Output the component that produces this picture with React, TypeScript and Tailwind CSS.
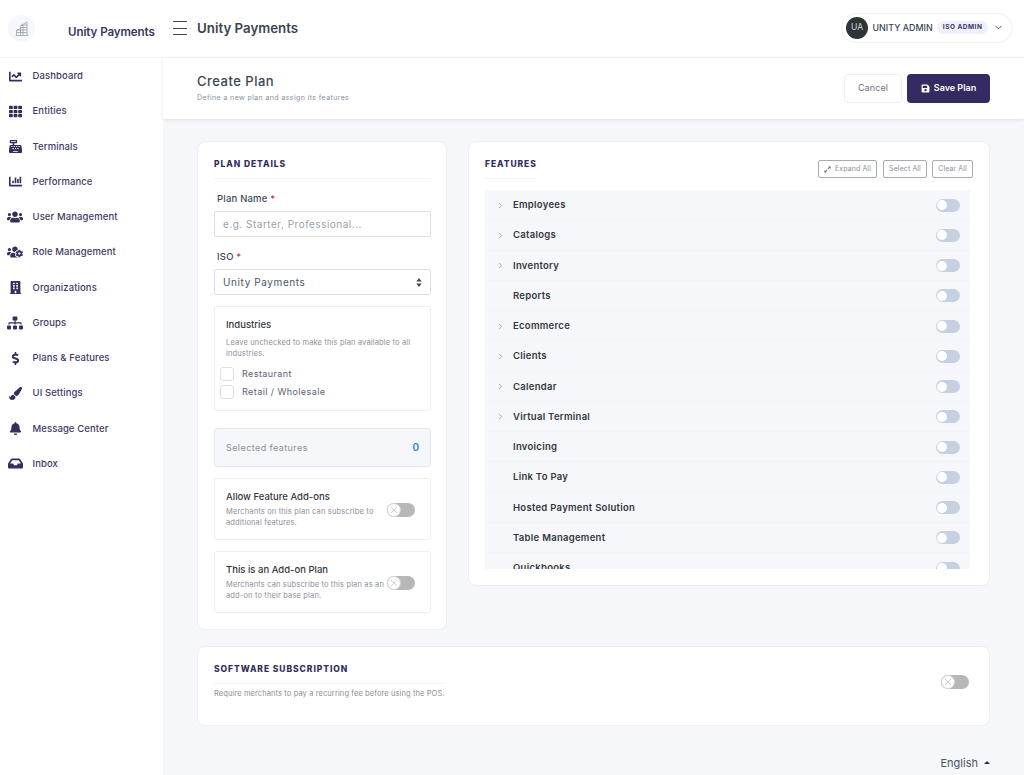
import { ChevronDown, ChevronRight } from 'lucide-react'
import {
  FaBell,
  FaBuilding,
  FaCashRegister,
  FaChartBar,
  FaChartLine,
  FaDollarSign,
  FaExpandAlt,
  FaInbox,
  FaPaintBrush,
  FaSave,
  FaSitemap,
  FaTh,
  FaUsers,
  FaUsersCog,
} from 'react-icons/fa'

const navItems = [
  { label: 'Dashboard', icon: FaChartLine, size: 'text-[13px]' },
  { label: 'Entities', icon: FaTh, size: 'text-[13px]' },
  { label: 'Terminals', icon: FaCashRegister, size: 'text-[13px]' },
  { label: 'Performance', icon: FaChartBar, size: 'text-[13px]' },
  { label: 'User Management', icon: FaUsers, size: 'text-[16px]' },
  { label: 'Role Management', icon: FaUsersCog, size: 'text-[16px]' },
  { label: 'Organizations', icon: FaBuilding, size: 'text-[13px]' },
  { label: 'Groups', icon: FaSitemap, size: 'text-[16px]' },
  { label: 'Plans & Features', icon: FaDollarSign, size: 'text-[13px]' },
  { label: 'UI Settings', icon: FaPaintBrush, size: 'text-[13px]' },
  { label: 'Message Center', icon: FaBell, size: 'text-[13px]' },
  { label: 'Inbox', icon: FaInbox, size: 'text-[15px]' },
]

const features = [
  { name: 'Employees', children: true },
  { name: 'Catalogs', children: true },
  { name: 'Inventory', children: true },
  { name: 'Reports', children: false },
  { name: 'Ecommerce', children: true },
  { name: 'Clients', children: true },
  { name: 'Calendar', children: true },
  { name: 'Virtual Terminal', children: true },
  { name: 'Invoicing', children: false },
  { name: 'Link To Pay', children: false },
  { name: 'Hosted Payment Solution', children: false },
  { name: 'Table Management', children: false },
  { name: 'Quickbooks', children: false },
]

function OffSwitch() {
  return (
    <div className="flex h-[14px] w-[28px] shrink-0 items-center rounded-full bg-[#b7b7b7]">
      <div className="flex h-[14px] w-[14px] items-center justify-center rounded-full border border-[#d4d4d4] bg-white">
        <svg width="8" height="8" viewBox="0 0 8 8" className="text-[#c4c4c4]">
          <path d="M1 1l6 6M7 1l-6 6" stroke="currentColor" strokeWidth="0.8" />
        </svg>
      </div>
    </div>
  )
}

function FeatureSwitch() {
  return (
    <div className="flex h-[13px] w-[24px] items-center rounded-full bg-[#c5d0e0] px-[1px]">
      <div className="h-[10px] w-[10px] rounded-full bg-white" />
    </div>
  )
}

function LogoMark() {
  return (
    <svg width="14" height="15" viewBox="0 0 14 15" fill="none" stroke="#98a1aa" strokeWidth="0.8">
      <path d="M.5 14.5h13M1.5 14V9.5L5.5 7.5V14M5.5 14V5L12 1V14M8 4v10M12 4H6M12 6.5H5.5M12 9H1.5M12 11.5H1.5" />
    </svg>
  )
}

function AddOnCard({ title, text, className }: { title: string; text: string; className: string }) {
  return (
    <div className={`rounded-[3px] border border-[#eceef2] pr-[15px] pl-[11px] ${className}`}>
      <div className="text-[9.5px] leading-[13px] font-medium text-[#33373d]">{title}</div>
      <div className="mt-[3px] flex items-start justify-between">
        <p className="w-[160px] text-[7.5px] leading-[11px] tracking-[0.15px] text-[#8b8f98]">{text}</p>
        <div className="-mt-[3px]">
          <OffSwitch />
        </div>
      </div>
    </div>
  )
}

export default function App() {
  return (
    <div className="flex h-[775px] w-[1024px] flex-col overflow-hidden bg-white font-['Inter',sans-serif]">
      {/* Top bar */}
      <header className="flex h-[58px] shrink-0 items-center border-b border-[#f2f3f5] pr-[11px]">
        <div className="flex w-[173px] items-center pl-[8px]">
          <div className="flex h-[27px] w-[27px] items-center justify-center rounded-full bg-[#f5f7fa]">
            <LogoMark />
          </div>
          <span className="mt-[8px] ml-[33px] text-[11.6px] font-semibold tracking-[-0.1px] whitespace-nowrap text-[#3b3760]">
            Unity Payments
          </span>
        </div>
        <button className="mb-[1px] flex h-[14px] w-[14px] flex-col justify-between">
          <span className="h-px w-full bg-[#3d4450]" />
          <span className="h-px w-full bg-[#3d4450]" />
          <span className="h-px w-full bg-[#3d4450]" />
        </button>
        <span className="mt-[1px] ml-[10px] text-[13.3px] font-semibold text-[#3d4450]">Unity Payments</span>
        <div className="mb-[2px] ml-auto flex h-[30px] w-[172px] items-center rounded-full border border-[#eef0f3] pl-[4px]">
          <div className="flex h-[22px] w-[22px] items-center justify-center rounded-full bg-[#2f3437] text-[8.5px] text-[#d7d9db]">
            UA
          </div>
          <span className="ml-[4.5px] text-[8.9px] font-medium whitespace-nowrap text-[#3d4450]">UNITY ADMIN</span>
          <span className="ml-[4.5px] flex h-[13px] w-[51px] items-center justify-center rounded-full bg-[#eef0fb] text-[6.5px] font-bold tracking-[0.5px] text-[#3b3760]">
            ISO ADMIN
          </span>
          <ChevronDown className="ml-[5px] h-[11px] w-[11px] text-[#3d4450]" />
        </div>
      </header>

      <div className="flex min-h-0 flex-1">
        {/* Sidebar */}
        <aside className="w-[163px] shrink-0 pt-[0.5px]">
          <nav>
            {navItems.map((item) => (
              <div key={item.label} className="flex h-[35.25px] items-center">
                <div className="flex w-[32.5px] shrink-0 justify-center pr-[2px]">
                  <item.icon className={`${item.size} text-[#352f5b]`} />
                </div>
                <span className="text-[9.5px] font-medium tracking-[0.1px] whitespace-nowrap text-[#3f3b63]">
                  {item.label}
                </span>
              </div>
            ))}
          </nav>
        </aside>

        <main className="flex min-w-0 flex-1 flex-col">
          {/* Page heading */}
          <div className="relative flex h-[61px] shrink-0 items-center justify-between bg-white px-[34px] shadow-[0_1px_4px_rgba(0,0,0,0.1)]">
            <div className="mt-[-2px]">
              <h1 className="text-[13px] leading-[18px] font-medium tracking-[0.5px] text-[#3d4450]">Create Plan</h1>
              <p className="mt-[3px] text-[7px] leading-[10px] tracking-[0.4px] text-[#8b8f98]">
                Define a new plan and assign its features
              </p>
            </div>
            <div className="mt-[-1px] flex gap-[5px]">
              <button className="h-[29px] w-[58px] rounded-[4px] border border-[#eceef2] text-[9px] tracking-[0.1px] text-[#6b7280]">
                Cancel
              </button>
              <button className="flex h-[29px] w-[83px] items-center justify-center gap-[4px] rounded-[4px] bg-[#352a62] text-[9px] font-semibold text-white">
                <FaSave className="text-[9px]" />
                Save Plan
              </button>
            </div>
          </div>

          {/* Content */}
          <div className="flex min-h-0 flex-1 flex-col bg-[#f5f7fa] px-[34px] pt-[22px]">
            <div className="flex items-start gap-[21px]">
              {/* Plan details */}
              <section className="h-[489px] w-[250px] shrink-0 rounded-[8px] border border-[#eceef2] bg-white pt-[15px] pr-[15px] pl-[16px]">
                <h2 className="border-b border-[#f2f3f5] pb-[7px] text-[8.5px] leading-[14px] font-extrabold tracking-[0.93px] text-[#332e5c]">
                  PLAN DETAILS
                </h2>
                <label className="mt-[14px] block pl-[3px] text-[9.5px] leading-[12px] font-medium tracking-[0.2px] text-[#414a5c]">
                  Plan Name <span className="text-[#d0315a]">*</span>
                </label>
                <input
                  placeholder="e.g. Starter, Professional..."
                  className="mt-[6px] block h-[26px] w-full rounded-[2px] border border-[#dcdfe4] px-[8px] text-[10px] tracking-[0.5px] text-[#414a5c] outline-none placeholder:text-[#9ca0a8]"
                />
                <label className="mt-[14px] block pl-[3px] text-[9.5px] leading-[12px] font-medium tracking-[0.2px] text-[#414a5c]">
                  ISO <span className="text-[#d0315a]">*</span>
                </label>
                <div className="relative mt-[6px]">
                  <select className="block h-[26px] w-full appearance-none rounded-[2px] border border-[#dcdfe4] bg-white px-[8px] text-[10px] tracking-[0.6px] text-[#4b5563] outline-none">
                    <option>Unity Payments</option>
                  </select>
                  <svg width="6" height="9" viewBox="0 0 6 9" className="absolute top-[9px] right-[9px] text-[#3d4450]">
                    <path d="M3 0l2.6 3.4H.4zM3 9L.4 5.6h5.2z" fill="currentColor" />
                  </svg>
                </div>

                <div className="mt-[11px] h-[105px] rounded-[3px] border border-[#eceef2] pt-[12px] pl-[11px]">
                  <div className="text-[9.5px] leading-[12px] font-medium text-[#33373d]">Industries</div>
                  <p className="mt-[6px] w-[190px] text-[7.5px] leading-[11px] tracking-[0.15px] text-[#8b8f98]">
                    Leave unchecked to make this plan available to all industries.
                  </p>
                  <div className="mt-[8px] -ml-[6px] flex flex-col gap-[4px]">
                    {['Restaurant', 'Retail / Wholesale'].map((name) => (
                      <label key={name} className="flex h-[14px] items-center gap-[8px]">
                        <span className="h-[14px] w-[14px] rounded-[3px] border border-[#dcdfe4] bg-white" />
                        <span className="text-[9px] tracking-[0.42px] text-[#5b6270]">{name}</span>
                      </label>
                    ))}
                  </div>
                </div>

                <div className="mt-[17px] flex h-[39px] items-center justify-between rounded-[3px] border border-[#e6e9ee] bg-[#f5f7fa] px-[11px]">
                  <span className="text-[9px] tracking-[0.42px] text-[#8b8f98]">Selected features</span>
                  <span className="text-[10px] font-semibold text-[#2f7fd0]">0</span>
                </div>

                <AddOnCard
                  title="Allow Feature Add-ons"
                  text="Merchants on this plan can subscribe to additional features."
                  className="mt-[11px] h-[62px] pt-[11px]"
                />
                <AddOnCard
                  title="This is an Add-on Plan"
                  text="Merchants can subscribe to this plan as an add-on to their base plan."
                  className="mt-[11px] h-[62px] pt-[11px]"
                />
              </section>

              {/* Features */}
              <section className="h-[445px] min-w-0 flex-1 rounded-[8px] border border-[#eceef2] bg-white px-[16px] pt-[15px]">
                <div className="flex items-start justify-between">
                  <h2 className="border-b border-[#f2f3f5] pb-[7px] text-[8.5px] leading-[14px] font-extrabold tracking-[0.93px] text-[#332e5c]">
                    FEATURES
                  </h2>
                  <div className="mt-[3px] flex gap-[5px] text-[7px] tracking-[0.1px] text-[#8b8f98]">
                    <button className="mr-[1px] flex h-[18px] w-[59px] items-center justify-center gap-[4px] rounded-[2px] border border-[#a8abb0]">
                      <FaExpandAlt className="text-[7px] text-[#5b6270]" />
                      Expand All
                    </button>
                    <button className="h-[18px] w-[44px] rounded-[2px] border border-[#a8abb0]">Select All</button>
                    <button className="h-[18px] w-[41px] rounded-[2px] border border-[#a8abb0]">Clear All</button>
                  </div>
                </div>
                <div className="mt-[11px] h-[379px] w-[485px] overflow-hidden bg-[#f5f7fa]">
                  {features.map((feature) => (
                    <div
                      key={feature.name}
                      className="flex h-[30.25px] shrink-0 items-center border-b border-[#f2f3f5] pt-[1px] pr-[10px]"
                    >
                      <div className="flex w-[28px] shrink-0 justify-center pl-[2px]">
                        {feature.children && <ChevronRight className="h-[9px] w-[9px] text-[#8b8f98]" strokeWidth={2} />}
                      </div>
                      <span className="text-[9.5px] font-semibold tracking-[0.28px] text-[#33373d]">{feature.name}</span>
                      <div className="ml-auto">
                        <FeatureSwitch />
                      </div>
                    </div>
                  ))}
                </div>
              </section>
            </div>

            {/* Software subscription */}
            <section className="mt-[16px] flex h-[80px] shrink-0 items-start justify-between rounded-[8px] border border-[#eceef2] bg-white pt-[15px] pr-[20px] pl-[16px]">
              <div className="w-[231px]">
                <h2 className="border-b border-[#f2f3f5] pb-[7px] text-[8.5px] leading-[14px] font-extrabold tracking-[0.93px] text-[#332e5c]">
                  SOFTWARE SUBSCRIPTION
                </h2>
                <p className="mt-[5px] text-[7.5px] leading-[10px] tracking-[0.1px] whitespace-nowrap text-[#8b8f98]">
                  Require merchants to pay a recurring fee before using the POS.
                </p>
              </div>
              <div className="mt-[13px]">
                <OffSwitch />
              </div>
            </section>

            <div className="mt-auto mb-[4px] flex items-center justify-end gap-[6px] text-[11px] text-[#4b5563]">
              English
              <svg width="6" height="3" viewBox="0 0 6 3" className="text-[#2f3437]">
                <path d="M3 0l3 3H0z" fill="currentColor" />
              </svg>
            </div>
          </div>
        </main>
      </div>
    </div>
  )
}
